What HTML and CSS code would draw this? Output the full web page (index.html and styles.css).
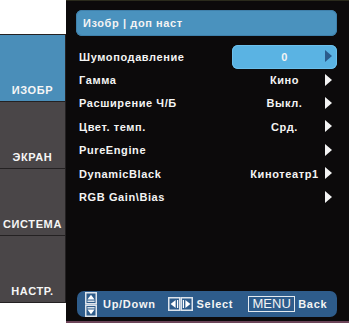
FILE: index.html
```html
<!DOCTYPE html>
<html lang="ru">
<head>
<meta charset="utf-8">
<link rel="stylesheet" href="styles.css">
</head>
<body>
<div class="screen">
  <nav class="tabs">
    <div class="tab active">ИЗОБР</div>
    <div class="tab">ЭКРАН</div>
    <div class="tab">СИСТЕМА</div>
    <div class="tab">НАСТР.</div>
  </nav>
  <main class="panel">
    <div class="title">Изобр | доп наст</div>
    <ul class="rows">
      <li class="row selected"><span class="label">Шумоподавление</span><span class="value">0<i class="arrow"></i></span></li>
      <li class="row"><span class="label">Гамма</span><span class="value">Кино<i class="arrow"></i></span></li>
      <li class="row"><span class="label">Расширение Ч/Б</span><span class="value">Выкл.<i class="arrow"></i></span></li>
      <li class="row"><span class="label">Цвет. темп.</span><span class="value">Срд.<i class="arrow"></i></span></li>
      <li class="row"><span class="label">PureEngine</span><span class="value"><i class="arrow"></i></span></li>
      <li class="row"><span class="label">DynamicBlack</span><span class="value">Кинотеатр1<i class="arrow"></i></span></li>
      <li class="row"><span class="label">RGB Gain\Bias</span><span class="value"><i class="arrow"></i></span></li>
    </ul>
    <footer class="hints">
      <svg class="ico-ud" width="12" height="25" viewBox="0 0 12 25">
        <rect x="0.75" y="0.75" width="10.5" height="11" fill="none" stroke="#dde4ec" stroke-width="1.5"/>
        <polygon points="6,2.8 9.6,7.6 2.4,7.6" fill="#fff"/>
        <rect x="2.4" y="8.6" width="7.2" height="1.2" fill="#fff"/>
        <rect x="0.75" y="13.25" width="10.5" height="11" fill="none" stroke="#dde4ec" stroke-width="1.5"/>
        <rect x="2.4" y="15.2" width="7.2" height="1.2" fill="#fff"/>
        <polygon points="2.4,17.4 9.6,17.4 6,22.2" fill="#fff"/>
      </svg>
      <span class="hint-text ud">Up/Down</span>
      <svg class="ico-lr" width="25" height="14" viewBox="0 0 25 14">
        <rect x="0.75" y="0.75" width="11" height="12.5" fill="none" stroke="#dde4ec" stroke-width="1.5"/>
        <polygon points="2.6,7 7.6,3 7.6,11" fill="#fff"/>
        <rect x="9" y="3" width="1.2" height="8" fill="#fff"/>
        <rect x="13.25" y="0.75" width="11" height="12.5" fill="none" stroke="#dde4ec" stroke-width="1.5"/>
        <rect x="14.8" y="3" width="1.2" height="8" fill="#fff"/>
        <polygon points="22.4,7 17.4,3 17.4,11" fill="#fff"/>
      </svg>
      <span class="hint-text sel">Select</span>
      <span class="menu-key">MENU</span>
      <span class="hint-text back">Back</span>
    </footer>
  </main>
</div>
</body>
</html>
```
FILE: styles.css
```css
* { box-sizing: border-box; }
html, body { margin: 0; padding: 0; background: #ffffff; }
body {
  font-family: "Liberation Sans", Arial, sans-serif;
  font-weight: bold;
  color: #f4f4f4;
}
.screen {
  display: flex;
  width: 349px;
  height: 323px;
}
.tabs {
  width: 66px;
  margin-top: 34px;
  align-self: flex-start;
  display: flex;
  flex-direction: column;
  gap: 1px;
  padding: 1px 1px 1px 0;
  background: #242122;
}
.tab {
  height: 66px;
  background: #4a4648;
  display: flex;
  align-items: flex-end;
  justify-content: center;
  padding-bottom: 4px;
  font-size: 11px;
  line-height: 13px;
  letter-spacing: 0.6px;
  color: #f6f6f6;
}
.tab.active { background: #4a8eb9; }

.panel {
  flex: 1;
  height: 323px;
  background: #0c0a0b;
  border-top: 1px solid #2a2a1c;
  border-bottom: 2px solid #6c4559;
  padding: 9px 12px 4px 10px;
  display: flex;
  flex-direction: column;
}
.title {
  height: 26px;
  border-radius: 6px;
  background: #4a92be;
  box-shadow: inset 0 0 0 1px #3f80ab;
  padding-left: 7px;
  font-size: 11px;
  line-height: 26px;
  letter-spacing: 0.6px;
}
.rows {
  list-style: none;
  margin: 9px 0 0;
  padding: 0;
}
.row {
  height: 23.4px;
  display: flex;
  align-items: center;
  font-size: 11px;
  letter-spacing: 0.6px;
}
.label {
  flex: 1;
  padding-left: 3px;
  white-space: nowrap;
}
.value {
  position: relative;
  width: 105px;
  height: 24px;
  line-height: 24px;
  text-align: center;
  border-radius: 6px;
  white-space: nowrap;
}
.selected .value {
  background: #5ab3e3;
  box-shadow: inset 0 0 0 1px #6cc0ec;
}
.arrow {
  position: absolute;
  right: 5px;
  top: 5.5px;
  width: 0;
  height: 0;
  border-left: 7px solid #f4f4f4;
  border-top: 6.5px solid transparent;
  border-bottom: 6.5px solid transparent;
}
.selected .arrow { border-left-color: #2b5b8c; }

.hints {
  margin-top: auto;
  margin-left: 1px;
  height: 26px;
  border-radius: 7px;
  background: #2e5c8b;
  display: flex;
  align-items: center;
  padding-left: 8px;
}
.hint-text {
  font-size: 11px;
  letter-spacing: 0.7px;
  white-space: nowrap;
}
.ud { margin-left: 6px; }
.ico-lr { margin-left: 12px; }
.sel { margin-left: 4px; }
.menu-key {
  margin-left: 15px;
  height: 16px;
  width: 47px;
  border: 1.5px solid #e4eaf0;
  font-weight: normal;
  font-size: 13px;
  line-height: 13px;
  text-align: center;
  color: #f4f4f4;
}
.back { margin-left: 3px; }
```
